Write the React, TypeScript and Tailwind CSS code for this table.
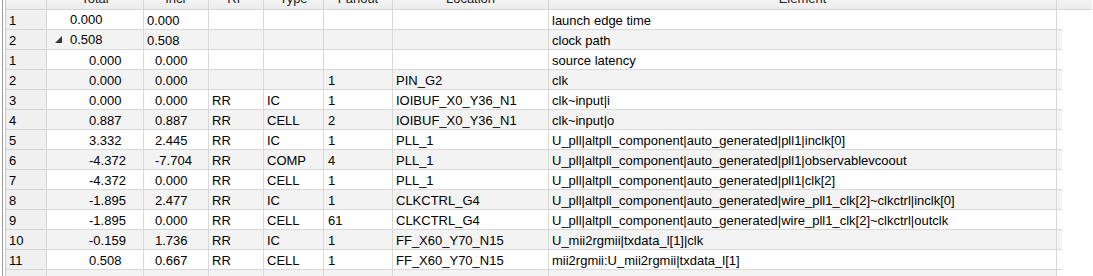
type Row = {
  n: string;
  total: string;
  incr: string;
  rf?: string;
  type?: string;
  fanout?: string;
  loc?: string;
  el: string;
  lvl: number;
  open?: boolean;
};

const rows: Row[] = [
  { n: "1", total: "0.000", incr: "0.000", el: "launch edge time", lvl: 0 },
  { n: "2", total: "0.508", incr: "0.508", el: "clock path", lvl: 0, open: true },
  { n: "1", total: "0.000", incr: "0.000", el: "source latency", lvl: 1 },
  { n: "2", total: "0.000", incr: "0.000", fanout: "1", loc: "PIN_G2", el: "clk", lvl: 1 },
  { n: "3", total: "0.000", incr: "0.000", rf: "RR", type: "IC", fanout: "1", loc: "IOIBUF_X0_Y36_N1", el: "clk~input|i", lvl: 1 },
  { n: "4", total: "0.887", incr: "0.887", rf: "RR", type: "CELL", fanout: "2", loc: "IOIBUF_X0_Y36_N1", el: "clk~input|o", lvl: 1 },
  { n: "5", total: "3.332", incr: "2.445", rf: "RR", type: "IC", fanout: "1", loc: "PLL_1", el: "U_pll|altpll_component|auto_generated|pll1|inclk[0]", lvl: 1 },
  { n: "6", total: "-4.372", incr: "-7.704", rf: "RR", type: "COMP", fanout: "4", loc: "PLL_1", el: "U_pll|altpll_component|auto_generated|pll1|observablevcoout", lvl: 1 },
  { n: "7", total: "-4.372", incr: "0.000", rf: "RR", type: "CELL", fanout: "1", loc: "PLL_1", el: "U_pll|altpll_component|auto_generated|pll1|clk[2]", lvl: 1 },
  { n: "8", total: "-1.895", incr: "2.477", rf: "RR", type: "IC", fanout: "1", loc: "CLKCTRL_G4", el: "U_pll|altpll_component|auto_generated|wire_pll1_clk[2]~clkctrl|inclk[0]", lvl: 1 },
  { n: "9", total: "-1.895", incr: "0.000", rf: "RR", type: "CELL", fanout: "61", loc: "CLKCTRL_G4", el: "U_pll|altpll_component|auto_generated|wire_pll1_clk[2]~clkctrl|outclk", lvl: 1 },
  { n: "10", total: "-0.159", incr: "1.736", rf: "RR", type: "IC", fanout: "1", loc: "FF_X60_Y70_N15", el: "U_mii2rgmii|txdata_l[1]|clk", lvl: 1 },
  { n: "11", total: "0.508", incr: "0.667", rf: "RR", type: "CELL", fanout: "1", loc: "FF_X60_Y70_N15", el: "mii2rgmii:U_mii2rgmii|txdata_l[1]", lvl: 1 },
];

const cell = "h-full border-r border-[#d9d9d9] pl-[3px] whitespace-nowrap overflow-hidden";

export default function App() {
  return (
    <div className="w-[1093px] h-[276px] overflow-hidden bg-white font-['Liberation_Sans',Arial,sans-serif] text-[13px] text-black">
      <div className="flex h-full pl-[2px]">
        <div className="h-full border-l border-[#9a9a9a] pl-[2px]">
          <div className="h-full border-l border-[#c8c8c8] flex flex-col w-[1087px]">
            {/* header, scrolled so only its lower half shows */}
            <div className="flex h-[10px] shrink-0 border-b border-[#d5d5d5] bg-gradient-to-b from-[#f4f4f4] to-[#ececec] overflow-hidden leading-[19px] text-[#222]">
              <div className="w-[41px] h-full border-r border-[#d5d5d5]" />
              {[
                ["Total", "w-[97px]"],
                ["Incr", "w-[65px]"],
                ["RF", "w-[55px]"],
                ["Type", "w-[60px]"],
                ["Fanout", "w-[69px]"],
                ["Location", "w-[156px]"],
                ["Element", "w-[508px]"],
              ].map(([label, w]) => (
                <div key={label} className={`${w} h-full border-r border-[#d5d5d5] text-center`}>
                  <div className="-mt-[11px]">{label}</div>
                </div>
              ))}
              <div className="flex-1 h-full" />
            </div>

            {rows.map((r, i) => (
              <div
                key={i}
                className={`flex h-[20px] shrink-0 leading-[21px] ${i % 2 === 0 ? "bg-white" : "bg-[#f3f3f3]"}`}
              >
                <div className="w-[41px] h-full border-r border-b border-[#d4d4d4] bg-[#f0f0f0] pl-[3px]">{r.n}</div>
                <div className="flex h-[20px] w-[1015px] border-b border-[#d9d9d9]">
                  <div className={`w-[97px] ${cell}`}>
                    {r.lvl === 0 ? (
                      <div className="flex items-center h-full pl-[5px]">
                        <span className="inline-flex w-[15px] shrink-0 items-center">
                          {r.open && (
                            <svg width="7" height="7" viewBox="0 0 7 7">
                              <polygon points="7,0 7,7 0,7" fill="#3a3a3a" />
                            </svg>
                          )}
                        </span>
                        <span>{r.total}</span>
                      </div>
                    ) : (
                      <span className="pl-[39px]">{r.total}</span>
                    )}
                  </div>
                  <div className={`w-[65px] ${cell}`}>
                    <span className={r.lvl === 0 ? "" : "pl-[8px]"}>{r.incr}</span>
                  </div>
                  <div className={`w-[55px] ${cell}`}>{r.rf}</div>
                  <div className={`w-[60px] ${cell}`}>{r.type}</div>
                  <div className={`w-[69px] ${cell} pl-[4px]`}>{r.fanout}</div>
                  <div className={`w-[156px] ${cell}`}>{r.loc}</div>
                  <div className={`w-[508px] ${cell}`}>{r.el}</div>
                </div>
                <div className="flex-1 h-full bg-white" />
              </div>
            ))}

            <div className="flex h-[20px] shrink-0 bg-[#f3f3f3]">
              <div className="w-[41px] h-full border-r border-[#d4d4d4] bg-[#f0f0f0]" />
              <div className="w-[97px] h-full border-r border-[#d9d9d9]" />
              <div className="w-[65px] h-full border-r border-[#d9d9d9]" />
              <div className="w-[55px] h-full border-r border-[#d9d9d9]" />
              <div className="w-[60px] h-full border-r border-[#d9d9d9]" />
              <div className="w-[69px] h-full border-r border-[#d9d9d9]" />
              <div className="w-[156px] h-full border-r border-[#d9d9d9]" />
              <div className="w-[508px] h-full border-r border-[#d9d9d9]" />
              <div className="flex-1 h-full bg-white" />
            </div>
          </div>
        </div>
      </div>
    </div>
  );
}
